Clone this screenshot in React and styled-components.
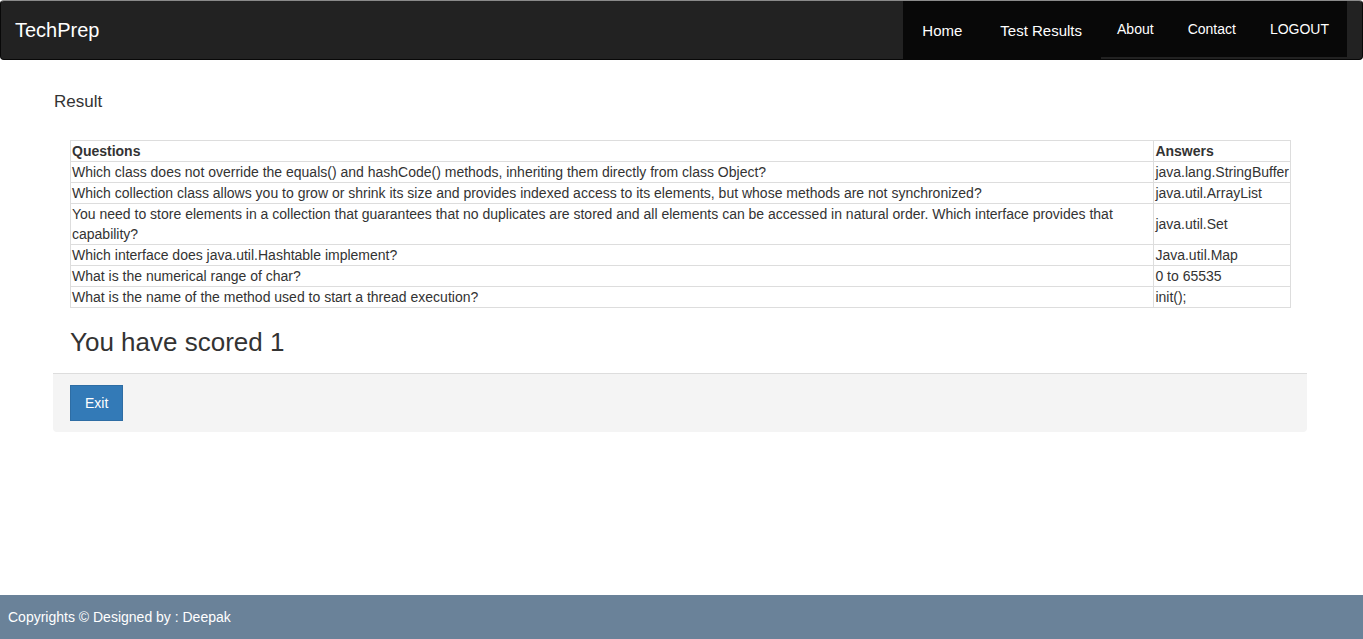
import React from "react";
import styled, { createGlobalStyle } from "styled-components";

const GlobalStyle = createGlobalStyle`
  html, body { margin: 0; padding: 0; }
  body {
    font-family: "Liberation Sans", Arial, Helvetica, sans-serif;
    font-size: 14px;
    line-height: 20px;
    color: #333;
    background: #fff;
  }
  * { box-sizing: border-box; }
`;

const Page = styled.div`
  min-height: 100vh;
  display: flex;
  flex-direction: column;
`;

const Navbar = styled.header`
  height: 60px;
  background: #222;
  border: 1px solid #080808;
  border-top-color: #8a8a8a;
  border-radius: 4px;
  display: flex;
  align-items: flex-start;
  justify-content: space-between;
  padding: 0 15px 0 14px;
`;

const Brand = styled.a`
  color: #fff;
  font-size: 20px;
  line-height: 58px;
  text-decoration: none;
`;

const NavList = styled.nav`
  display: flex;
  align-items: flex-start;
`;

const NavItem = styled.a`
  display: block;
  background: #080808;
  color: #fff;
  text-decoration: none;
  height: ${(p) => (p.$tall ? "58px" : "56px")};
  line-height: ${(p) => (p.$tall ? "59px" : "56px")};
  font-size: ${(p) => (p.$tall ? "15px" : "14px")};
  padding: ${(p) => (p.$tall ? "0 19px" : "0 18px 0 16px")};
`;

const Main = styled.main`
  flex: 1;
  margin: 0 56px 0 53px;
  padding-top: 30px;
`;

const Title = styled.div`
  font-size: 17px;
  line-height: 24px;
  padding-left: 1px;
`;

const Table = styled.table`
  margin: 26px 16px 0 17px;
  width: calc(100% - 33px);
  border-collapse: collapse;
  font-size: 14px;
  line-height: 20px;
`;

const Cell = styled.td`
  border: 1px solid #ddd;
  padding: 0 1px;
  vertical-align: middle;
  font-weight: ${(p) => (p.$head ? "bold" : "normal")};
  width: ${(p) => (p.$answer ? "1%" : "auto")};
  white-space: ${(p) => (p.$answer ? "nowrap" : "normal")};
`;

const Score = styled.h3`
  margin: 20px 0 0 17px;
  font-size: 26px;
  line-height: 29px;
  font-weight: normal;
  color: #333;
`;

const Panel = styled.div`
  margin-top: 16px;
  background: #f4f4f4;
  border-top: 1px solid #ddd;
  border-radius: 0 0 4px 4px;
  padding: 11px 17px;
`;

const Button = styled.button`
  font-family: inherit;
  font-size: 14px;
  line-height: 20px;
  color: #fff;
  background: #337ab7;
  border: 1px solid #2e6da4;
  border-radius: 0;
  padding: 7px 14px;
  cursor: pointer;
  display: block;
`;

const Footer = styled.footer`
  height: 44px;
  background: #6a8299;
  color: #fff;
  font-size: 14px;
  line-height: 44px;
  padding: 0 8px;
`;

const rows = [
  ["Which class does not override the equals() and hashCode() methods, inheriting them directly from class Object?", "java.lang.StringBuffer"],
  ["Which collection class allows you to grow or shrink its size and provides indexed access to its elements, but whose methods are not synchronized?", "java.util.ArrayList"],
  ["You need to store elements in a collection that guarantees that no duplicates are stored and all elements can be accessed in natural order. Which interface provides that capability?", "java.util.Set"],
  ["Which interface does java.util.Hashtable implement?", "Java.util.Map"],
  ["What is the numerical range of char?", "0 to 65535"],
  ["What is the name of the method used to start a thread execution?", "init();"],
];

export default function App() {
  return (
    <Page>
      <GlobalStyle />
      <Navbar>
        <Brand href="#">TechPrep</Brand>
        <NavList>
          <NavItem $tall href="#">Home</NavItem>
          <NavItem $tall href="#">Test Results</NavItem>
          <NavItem href="#">About</NavItem>
          <NavItem href="#">Contact</NavItem>
          <NavItem href="#">LOGOUT</NavItem>
        </NavList>
      </Navbar>
      <Main>
        <Title>Result</Title>
        <Table>
          <tbody>
            <tr>
              <Cell $head>Questions</Cell>
              <Cell $head $answer>Answers</Cell>
            </tr>
            {rows.map(([q, a], i) => (
              <tr key={i}>
                <Cell>{q}</Cell>
                <Cell $answer>{a}</Cell>
              </tr>
            ))}
          </tbody>
        </Table>
        <Score>You have scored 1</Score>
        <Panel>
          <Button>Exit</Button>
        </Panel>
      </Main>
      <Footer>Copyrights © Designed by : Deepak</Footer>
    </Page>
  );
}
